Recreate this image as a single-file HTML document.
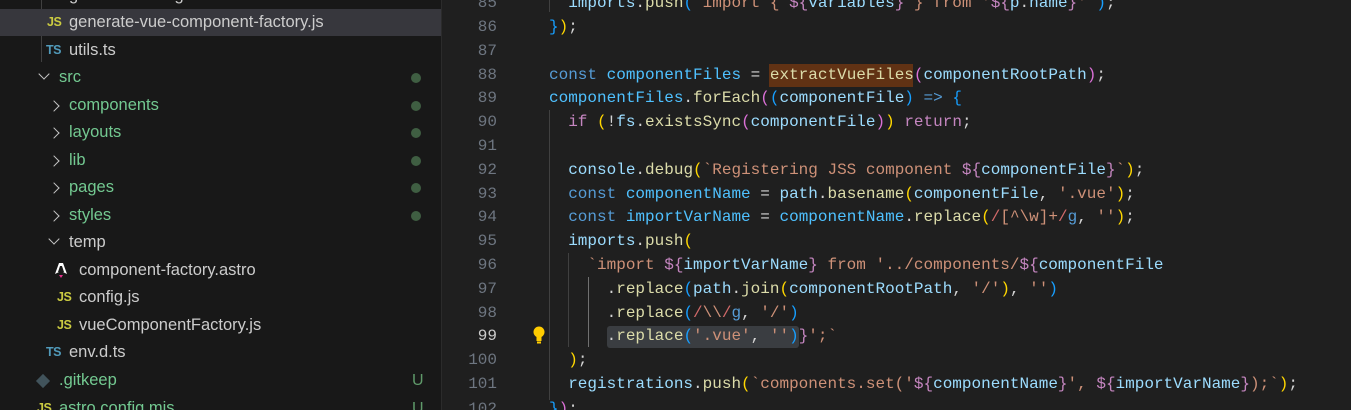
<!DOCTYPE html>
<html><head><meta charset="utf-8"><style>
*{margin:0;padding:0;box-sizing:border-box}
html,body{width:1351px;height:410px;overflow:hidden}
body{background:#1f1f1f;position:relative;font-family:"Liberation Sans",sans-serif}
#side{position:absolute;left:0;top:0;width:442px;height:410px;background:#181818;border-right:1px solid #2b2b2b;overflow:hidden}
.row{position:absolute;left:0;width:441px;height:27px;font-size:16.5px;color:#cccccc;line-height:27px;white-space:nowrap}
.row .t{position:absolute;top:0}
.g{color:#73c991}
.dot{position:absolute;left:411px;top:9px;width:10px;height:10px;border-radius:50%;background:#3f5e42}
.U{position:absolute;left:412px;top:0;color:#5f9a6a;font-size:16px}
.js{position:absolute;top:1px;line-height:24px;font:bold 12.5px/24px "Liberation Sans",sans-serif;color:#cbcb41;letter-spacing:-0.5px}
.ts{position:absolute;top:1px;font:bold 12.5px/24px "Liberation Sans",sans-serif;color:#519aba;letter-spacing:-0.5px}
.chev{position:absolute;width:8px;height:8px;border-right:1.5px solid #c5c5c5;border-bottom:1.5px solid #c5c5c5}
.ln{position:absolute;left:443px;width:54px;text-align:right;font:16px "Liberation Mono",monospace;color:#6e7681;height:24px;line-height:24px}
.cl{position:absolute;left:549px;font:16px "Liberation Mono",monospace;color:#9cdcfe;white-space:pre;height:24px;line-height:24px}
.k{color:#569cd6}.f{color:#dcdcaa}.s{color:#ce9178}.c{color:#c586c0}.p{color:#d4d4d4}
.b1{color:#ffd700}.b2{color:#da70d6}.b3{color:#179fff}.r{color:#d16969}
.guide{position:absolute;width:1px;background:#404040}
</style></head><body>
<div id="side">
<div class="guide" style="left:41px;top:0;height:62px"></div>
<div class="row" style="top:-18px"><span class="t" style="left:69px">generate-config.ts</span></div>
<div class="row" style="top:9px;background:#37373d"><span class="js" style="left:47px">JS</span><span class="t" style="left:69px">generate-vue-component-factory.js</span></div>
<div class="row" style="top:37px"><span class="ts" style="left:46px">TS</span><span class="t" style="left:69px">utils.ts</span></div>
<div class="row" style="top:64px"><span class="chev" style="left:40px;top:6px;transform:rotate(45deg)"></span><span class="t g" style="left:59px">src</span><span class="dot"></span></div>
<div class="row" style="top:92px"><span class="chev" style="left:50px;top:10px;transform:rotate(-45deg)"></span><span class="t g" style="left:69px">components</span><span class="dot"></span></div>
<div class="row" style="top:119px"><span class="chev" style="left:50px;top:10px;transform:rotate(-45deg)"></span><span class="t g" style="left:69px">layouts</span><span class="dot"></span></div>
<div class="row" style="top:147px"><span class="chev" style="left:50px;top:10px;transform:rotate(-45deg)"></span><span class="t g" style="left:69px">lib</span><span class="dot"></span></div>
<div class="row" style="top:174px"><span class="chev" style="left:50px;top:10px;transform:rotate(-45deg)"></span><span class="t g" style="left:69px">pages</span><span class="dot"></span></div>
<div class="row" style="top:202px"><span class="chev" style="left:50px;top:10px;transform:rotate(-45deg)"></span><span class="t g" style="left:69px">styles</span><span class="dot"></span></div>
<div class="row" style="top:229px"><span class="chev" style="left:50px;top:6px;transform:rotate(45deg)"></span><span class="t" style="left:69px">temp</span></div>
<div class="row" style="top:257px"><svg style="position:absolute;left:54px;top:5px" width="14" height="18" viewBox="0 0 14 18"><path d="M5 1h4l4 11-4-2H5l-4 2z" fill="#fff"/><path d="M5 13h4l-2 3z" fill="#e2338d"/><path d="M6 4l-2 6h6L8 4z" fill="#181818"/></svg><span class="t" style="left:79px">component-factory.astro</span></div>
<div class="row" style="top:284px"><span class="js" style="left:57px">JS</span><span class="t" style="left:79px">config.js</span></div>
<div class="row" style="top:312px"><span class="js" style="left:57px">JS</span><span class="t" style="left:79px">vueComponentFactory.js</span></div>
<div class="row" style="top:339px"><span class="ts" style="left:46px">TS</span><span class="t" style="left:69px">env.d.ts</span></div>
<div class="row" style="top:367px"><span style="position:absolute;left:38px;top:9px;width:10px;height:10px;background:#41535b;transform:rotate(45deg)"></span><span class="t g" style="left:59px">.gitkeep</span><span class="U">U</span></div>
<div class="row" style="top:395px"><span class="js" style="left:37px">JS</span><span class="t g" style="left:59px">astro.config.mjs</span><span class="U">U</span></div>
</div>

<div class="guide" style="left:549px;top:0;height:12px"></div>
<div class="guide" style="left:549px;top:110px;height:290px"></div>
<div class="guide" style="left:568px;top:253px;height:94px"></div>
<div class="guide" style="left:588px;top:277px;height:70px;background:#707070"></div>

<div class="ln" style="top:-9px">85</div><div class="ln" style="top:15px">86</div><div class="ln" style="top:39px">87</div><div class="ln" style="top:63px">88</div><div class="ln" style="top:86px">89</div><div class="ln" style="top:110px">90</div><div class="ln" style="top:134px">91</div><div class="ln" style="top:158px">92</div><div class="ln" style="top:182px">93</div><div class="ln" style="top:205px">94</div><div class="ln" style="top:229px">95</div><div class="ln" style="top:253px">96</div><div class="ln" style="top:277px">97</div><div class="ln" style="top:301px">98</div><div class="ln" style="top:324px;color:#ccc">99</div><div class="ln" style="top:348px">100</div><div class="ln" style="top:372px">101</div><div class="ln" style="top:397px">102</div>

<div style="position:absolute;left:769px;top:64px;width:144px;height:23px;background:#613214"></div>
<div style="position:absolute;left:607px;top:326px;width:192px;height:22px;background:#3a3d41;border-radius:3px"></div>
<svg style="position:absolute;left:532px;top:326px" width="14" height="18" viewBox="0 0 14 18"><circle cx="7" cy="6" r="5.5" fill="#ffcc00"/><rect x="4.5" y="10" width="5" height="5" fill="#ffcc00"/><rect x="5" y="15.5" width="4" height="2" fill="#ffcc00"/></svg>

<div class="cl" style="top:-9px">  imports<span class="p">.</span><span class="f">push</span><span class="b3">(</span><span class="s">`import { </span><span class="c">${</span>variables<span class="c">}</span><span class="s"> } from '</span><span class="c">${</span>p<span class="p">.</span>name<span class="c">}</span><span class="s">'`</span><span class="b3">)</span><span class="p">;</span></div>
<div class="cl" style="top:15px"><span class="b3">}</span><span class="b1">)</span><span class="p">;</span></div>
<div class="cl" style="top:63px"><span class="k">const</span> <span style="color:#4fc1ff">componentFiles</span> <span class="p">=</span> <span class="f">extractVueFiles</span><span class="b2">(</span>componentRootPath<span class="b2">)</span><span class="p">;</span></div>
<div class="cl" style="top:86px"><span style="color:#4fc1ff">componentFiles</span><span class="p">.</span><span class="f">forEach</span><span class="b2">(</span><span class="b3">(</span>componentFile<span class="b3">)</span> <span class="k">=&gt;</span> <span class="b3">{</span></div>
<div class="cl" style="top:110px">  <span class="c">if</span> <span class="b1">(</span><span class="p">!</span>fs<span class="p">.</span><span class="f">existsSync</span><span class="b2">(</span>componentFile<span class="b2">)</span><span class="b1">)</span> <span class="c">return</span><span class="p">;</span></div>
<div class="cl" style="top:158px">  console<span class="p">.</span><span class="f">debug</span><span class="b1">(</span><span class="s">`Registering JSS component </span><span class="c">${</span>componentFile<span class="c">}</span><span class="s">`</span><span class="b1">)</span><span class="p">;</span></div>
<div class="cl" style="top:182px">  <span class="k">const</span> <span style="color:#4fc1ff">componentName</span> <span class="p">=</span> path<span class="p">.</span><span class="f">basename</span><span class="b1">(</span>componentFile<span class="p">,</span> <span class="s">'.vue'</span><span class="b1">)</span><span class="p">;</span></div>
<div class="cl" style="top:205px">  <span class="k">const</span> <span style="color:#4fc1ff">importVarName</span> <span class="p">=</span> <span style="color:#4fc1ff">componentName</span><span class="p">.</span><span class="f">replace</span><span class="b1">(</span><span class="r">/</span><span class="s">[^\w]+</span><span class="r">/</span><span class="k">g</span><span class="p">,</span> <span class="s">''</span><span class="b1">)</span><span class="p">;</span></div>
<div class="cl" style="top:229px">  imports<span class="p">.</span><span class="f">push</span><span class="b1">(</span></div>
<div class="cl" style="top:253px">    <span class="s">`import </span><span class="c">${</span>importVarName<span class="c">}</span><span class="s"> from '../components/</span><span class="c">${</span>componentFile</div>
<div class="cl" style="top:277px">      <span class="p">.</span><span class="f">replace</span><span class="b3">(</span>path<span class="p">.</span><span class="f">join</span><span class="b1">(</span>componentRootPath<span class="p">,</span> <span class="s">'/'</span><span class="b1">)</span><span class="p">,</span> <span class="s">''</span><span class="b3">)</span></div>
<div class="cl" style="top:301px">      <span class="p">.</span><span class="f">replace</span><span class="b3">(</span><span class="r">/</span><span class="s">\\</span><span class="r">/</span><span class="k">g</span><span class="p">,</span> <span class="s">'/'</span><span class="b3">)</span></div>
<div class="cl" style="top:324px">      <span class="p">.</span><span class="f">replace</span><span class="b3">(</span><span class="s">'.vue'</span><span class="p">,</span> <span class="s">''</span><span class="b3">)</span><span class="c">}</span><span class="s">';`</span></div>
<div class="cl" style="top:348px">  <span class="b1">)</span><span class="p">;</span></div>
<div class="cl" style="top:372px">  registrations<span class="p">.</span><span class="f">push</span><span class="b1">(</span><span class="s">`components.set('</span><span class="c">${</span>componentName<span class="c">}</span><span class="s">', </span><span class="c">${</span>importVarName<span class="c">}</span><span class="s">);`</span><span class="b1">)</span><span class="p">;</span></div>
<div class="cl" style="top:397px"><span class="b3">}</span><span class="b2">)</span><span class="p">;</span></div>
</body></html>
